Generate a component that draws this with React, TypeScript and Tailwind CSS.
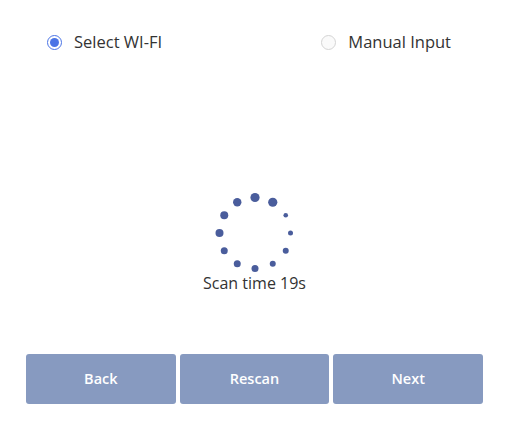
import React from 'react';

const dots = [
  { a: 0, r: 4.6 },
  { a: 30, r: 4.6 },
  { a: 60, r: 2.3 },
  { a: 90, r: 2.5 },
  { a: 120, r: 3 },
  { a: 150, r: 3 },
  { a: 180, r: 3.5 },
  { a: 210, r: 3.5 },
  { a: 240, r: 3.5 },
  { a: 270, r: 4 },
  { a: 300, r: 4 },
  { a: 330, r: 4.2 },
];

const Spinner: React.FC = () => (
  <svg width="84" height="84" viewBox="-42 -42 84 84">
    {dots.map((d, i) => {
      const rad = (d.a * Math.PI) / 180;
      return (
        <circle
          key={i}
          cx={Math.sin(rad) * 35.5}
          cy={-Math.cos(rad) * 35.5}
          r={d.r}
          fill="#4a5d9c"
        />
      );
    })}
  </svg>
);

const Radio: React.FC<{ checked?: boolean; label: string }> = ({ checked, label }) => (
  <label className="flex items-center gap-[12px] cursor-pointer">
    {checked ? (
      <span className="w-[15px] h-[15px] rounded-full border-[1.5px] border-[#4b74e6] flex items-center justify-center">
        <span className="w-[9px] h-[9px] rounded-full bg-[#4b74e6]" />
      </span>
    ) : (
      <span className="w-[15px] h-[15px] rounded-full border border-[#d4d4d4] bg-[#fafafa]" />
    )}
    <span className="text-[16.5px] text-[#333]">{label}</span>
  </label>
);

const App: React.FC = () => {
  return (
    <div
      className="w-[509px] h-[438px] bg-white flex flex-col"
      style={{ fontFamily: '"Open Sans", "Noto Sans", sans-serif' }}
    >
      {/* Mode selection */}
      <div className="flex items-center justify-between pl-[47px] pr-[58px] pt-[31px] h-[53px]">
        <Radio checked label="Select WI-FI" />
        <Radio label="Manual Input" />
      </div>

      {/* Scanning */}
      <div className="flex flex-col items-center mt-[138px]">
        <Spinner />
        <div className="text-[16px] text-[#333] mt-[-3px] leading-[22px]">Scan time 19s</div>
      </div>

      {/* Actions */}
      <div className="flex gap-[4px] px-[26px] mt-[60px]">
        {['Back', 'Rescan', 'Next'].map((t) => (
          <button
            key={t}
            className="flex-1 h-[50px] rounded-[3px] bg-[#879ac0] text-white text-[14.5px] font-semibold"
          >
            {t}
          </button>
        ))}
      </div>
    </div>
  );
};

export default App;
